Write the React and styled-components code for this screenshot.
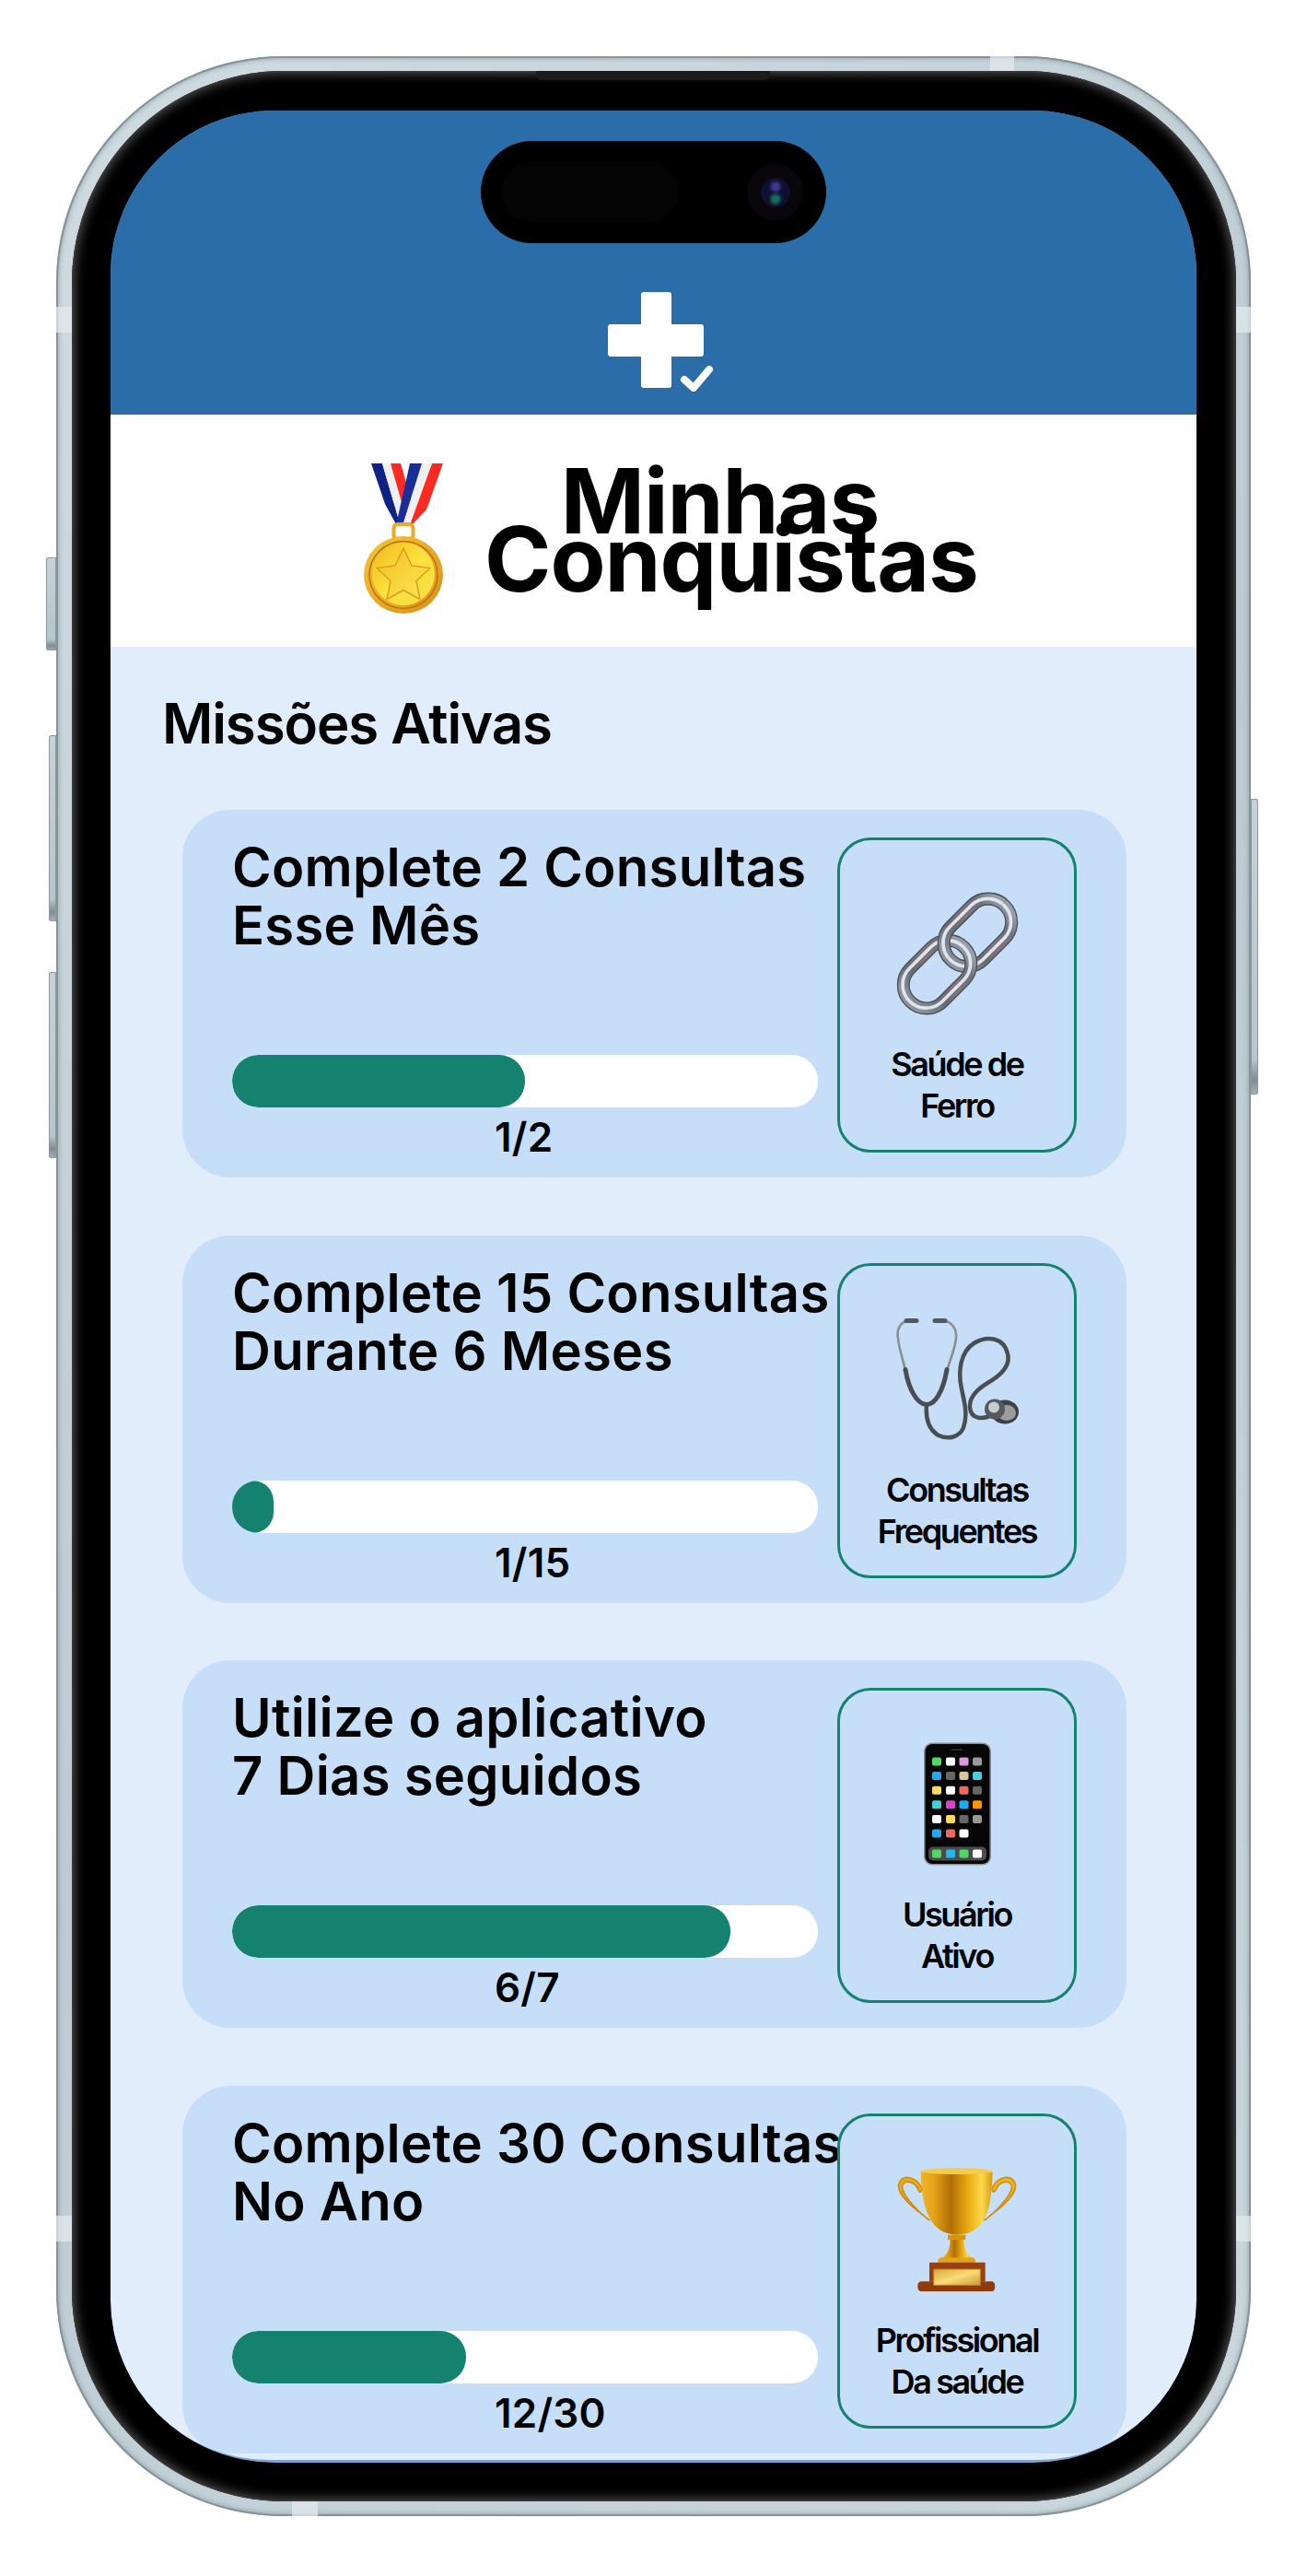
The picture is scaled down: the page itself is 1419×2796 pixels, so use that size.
import styled, { createGlobalStyle } from "styled-components"

const GlobalStyle = createGlobalStyle`
    body {
        margin: 0;
        background: #fff;
        font-family: "Inter", "Liberation Sans", sans-serif;
        color: #000;
    }
`

const Page = styled.div`
    width: 1419px;
    height: 2796px;
    padding: 61px;
    box-sizing: border-box;
    overflow: hidden;
`

const Phone = styled.div`
    position: relative;
    width: 1297px;
    height: 2670px;
    box-sizing: border-box;
    padding: 16px 16px 16px 17px;
    border-radius: 246px;
    background: linear-gradient(135deg, #cfdbe1 0%, #bccbd3 50%, #cad7dd 100%);
    box-shadow: inset 0 0 0 2px #84949a, inset 0 0 5px 3px rgba(110, 125, 132, 0.45);
`

const SideButton = styled.div`
    position: absolute;
    top: ${({ $top }) => $top}px;
    height: ${({ $height }) => $height}px;
    width: ${({ $width }) => $width}px;
    ${({ $right, $width }) => ($right ? `right: -${$width}px;` : `left: -${$width}px;`)}
    border-radius: ${({ $right }) => ($right ? "0 3px 3px 0" : "3px 0 0 3px")};
    background: linear-gradient(180deg, #c6d2d8 0%, #b7c5cc 88%, #7f8d93 95%, #a5b3ba 100%);
    box-shadow: inset 0 0 0 1px #8b9aa1;
`

const Band = styled.div`
    position: absolute;
    background: rgba(226, 233, 236, 0.75);
    ${({ $pos }) => $pos}
`

const Bezel = styled.div`
    position: relative;
    height: 100%;
    box-sizing: border-box;
    padding: 43px 43px 42px 42px;
    border-radius: 230px;
    background: #000;
    box-shadow: inset 0 0 0 1px #3c3c3c, inset 0 0 12px 3px rgba(105, 105, 105, 0.75);
`

const Speaker = styled.div`
    position: absolute;
    top: 0;
    left: 504px;
    width: 254px;
    height: 10px;
    border-radius: 0 0 6px 6px;
    background: #1b1b1b;
`

const Screen = styled.div`
    position: relative;
    height: 100%;
    display: flex;
    flex-direction: column;
    overflow: hidden;
    border-radius: 178px;
    background: #7ba6cf;
`

const Island = styled.div`
    position: absolute;
    top: 33px;
    left: 402px;
    width: 375px;
    height: 111px;
    box-sizing: border-box;
    padding: 0 25px 0 22px;
    display: flex;
    align-items: center;
    justify-content: space-between;
    border-radius: 56px;
    background: #000;
`

const Sensor = styled.div`
    width: 193px;
    height: 65px;
    border-radius: 32px;
    background: #040404;
`

const Lens = styled.div`
    width: 61px;
    height: 61px;
    display: flex;
    align-items: center;
    justify-content: center;
    border-radius: 50%;
    background: #08050b;
`

const LensGlass = styled.div`
    width: 32px;
    height: 32px;
    border-radius: 50%;
    background: radial-gradient(circle at 50% 30%, #3a3a90 0 10%, transparent 28%),
        radial-gradient(circle at 50% 72%, #186e5c 0 10%, transparent 28%), #0f0f30;
`

const Header = styled.header`
    flex: 0 0 330px;
    box-sizing: border-box;
    padding: 0 0 25px 14px;
    display: flex;
    align-items: flex-end;
    justify-content: center;
    background: #2b6da8;
`

const HeadBand = styled.div`
    flex: 0 0 252px;
    box-sizing: border-box;
    padding: 53px 0 0 275px;
    display: flex;
    align-items: flex-start;
    gap: 45px;
    background: #fff;
`

const Heading = styled.h1`
    margin: 9px 0 0;
    width: 533px;
    font-size: 98px;
    line-height: 63px;
    font-weight: 700;
    letter-spacing: -1px;
    text-align: center;
`

const HeadLine = styled.span`
    display: block;
    padding-right: ${({ $shift }) => $shift || 0}px;
`

const Body = styled.main`
    flex: 1;
    min-height: 0;
    margin-bottom: 3px;
    padding: 47px 76px 0 78px;
    overflow: hidden;
    border-radius: 0 0 172px 172px;
    background: #e1edfa;
`

const SectionTitle = styled.h2`
    margin: 0 0 58px -22px;
    font-size: 60px;
    line-height: 72px;
    font-weight: 600;
    letter-spacing: -1.1px;
`

const CardList = styled.div`
    display: flex;
    flex-direction: column;
    gap: 62.6px;
`

const Card = styled.section`
    flex: 0 0 399px;
    height: 399px;
    box-sizing: border-box;
    padding: 30px 54px 27px;
    display: flex;
    border-radius: 52px;
    background: #c7def8;
`

const Mission = styled.div`
    flex: 1;
    min-width: 0;
`

const MissionTitle = styled.h3`
    margin: 1px 0 0;
    font-size: 58px;
    line-height: 63px;
    font-weight: 600;
    letter-spacing: 0.25px;
    white-space: nowrap;
`

const Track = styled.div`
    width: 636px;
    height: 57px;
    margin-top: 109px;
    border-radius: 28px;
    background: #fff;
    overflow: hidden;
`

const Fill = styled.div`
    height: 100%;
    border-radius: 28px;
    background: #14826f;
`

const Count = styled.div`
    margin: 7px 0 0 285px;
    font-size: 44px;
    line-height: 50px;
    font-weight: 600;
    letter-spacing: 0.2px;
`

const Badge = styled.div`
    flex: 0 0 260px;
    box-sizing: border-box;
    padding-top: 56px;
    display: flex;
    flex-direction: column;
    align-items: center;
    border: 3px solid #14826f;
    border-radius: 36px;
`

const BadgeIcon = styled.svg`
    height: 134px;
    flex: none;
`

const BadgeLabel = styled.div`
    margin-top: 31px;
    font-size: 36px;
    line-height: 45px;
    font-weight: 600;
    letter-spacing: -2.4px;
    text-align: center;
    white-space: nowrap;
`

const Logo = () => (
    <svg width="114" height="108" viewBox="0 0 114 108">
        <path
            fill="#fff"
            d="M39 0h27a3 3 0 0 1 3 3v32h32a3 3 0 0 1 3 3v29a3 3 0 0 1-3 3H69v31a3 3 0 0 1-3 3H39a3 3 0 0 1-3-3V70H3a3 3 0 0 1-3-3V38a3 3 0 0 1 3-3h33V3a3 3 0 0 1 3-3z"
        />
        <path d="M83 95l10 9 17-20" fill="none" stroke="#fff" strokeWidth="8" strokeLinecap="round" strokeLinejoin="round" />
    </svg>
)

const Medal = () => (
    <svg width="86" height="163" viewBox="0 0 86 163">
        <defs>
            <linearGradient id="medalRim" x1="0" y1="0" x2="1" y2="1">
                <stop offset="0" stopColor="#f3c53a" />
                <stop offset="0.55" stopColor="#e9a823" />
                <stop offset="1" stopColor="#d98d17" />
            </linearGradient>
            <linearGradient id="medalFace" x1="0" y1="0" x2="1" y2="1">
                <stop offset="0" stopColor="#f0b91d" />
                <stop offset="0.5" stopColor="#fbe23e" />
                <stop offset="1" stopColor="#f5dc45" />
            </linearGradient>
            <linearGradient id="medalStar" x1="0" y1="0" x2="1" y2="1">
                <stop offset="0" stopColor="#f4bf24" />
                <stop offset="1" stopColor="#fbe754" />
            </linearGradient>
        </defs>
        <path d="M29 0h11l12 42-8 22-10-14z" fill="#fd2a22" />
        <path d="M8 0h12l19 65-4 1-12-22z" fill="#0d2287" />
        <path d="M20 0h9l16 56-6 9z" fill="#eff0f2" />
        <path d="M74 0h12L68 50 52 67h-7z" fill="#fd2a22" />
        <path d="M63 0h11L50 67h-8z" fill="#eff0f2" />
        <path d="M50 0h13L42 67h-7z" fill="#1b2d97" />
        <rect x="32.5" y="66" width="21" height="16" rx="4" fill="none" stroke="#e7ab28" strokeWidth="4" />
        <ellipse cx="43" cy="121" rx="43" ry="42" fill="url(#medalRim)" />
        <ellipse cx="43" cy="121" rx="37" ry="36.5" fill="none" stroke="#b7731a" strokeWidth="1.5" />
        <ellipse cx="43" cy="120" rx="34" ry="34" fill="url(#medalFace)" />
        <path
            d="M43 92l9 19 20 2.500-15 14 4 20-18-10-18 10 4-20-15-14 20-2.500z"
            fill="url(#medalStar)"
            stroke="#dc9e20"
            strokeWidth="1.5"
            strokeLinejoin="round"
        />
    </svg>
)

const ChainRing = ({ cx, cy }) => (
    <g transform={`rotate(-45 ${cx} ${cy})`} fill="none">
        <rect x={cx - 125} y={cy - 76} width="250" height="152" rx="76" stroke="#4d5056" strokeWidth="42" />
        <rect x={cx - 125} y={cy - 76} width="250" height="152" rx="76" stroke="url(#steel)" strokeWidth="34" />
        <rect x={cx - 126} y={cy - 78} width="250" height="152" rx="76" stroke="#dfe5ec" strokeWidth="11" />
    </g>
)

const ChainIcon = () => (
    <BadgeIcon viewBox="0 0 400 400" width="133">
        <defs>
            <linearGradient id="steel" x1="0" y1="0" x2="1" y2="0">
                <stop offset="0" stopColor="#8d949d" />
                <stop offset="0.3" stopColor="#686b72" />
                <stop offset="0.55" stopColor="#83747a" />
                <stop offset="0.8" stopColor="#6e737c" />
                <stop offset="1" stopColor="#98a0ab" />
            </linearGradient>
            <clipPath id="chainOver">
                <path d="M0 0H385L0 385z" />
            </clipPath>
        </defs>
        <ChainRing cx={266} cy={132} />
        <ChainRing cx={134} cy={268} />
        <g clipPath="url(#chainOver)">
            <ChainRing cx={266} cy={132} />
        </g>
    </BadgeIcon>
)

const StethoscopeIcon = () => (
    <BadgeIcon viewBox="0 0 133 133" width="133">
        <g fill="none" strokeLinecap="round" strokeLinejoin="round">
            <path d="M15 3C5 3 0 12 2 22c1 12 6 24 8 36" stroke="#8b8f92" strokeWidth="2.600" />
            <path d="M50 3c10 0 16 9 15 19-1 12-7 24-10 36" stroke="#8b8f92" strokeWidth="2.600" />
            <path d="M10 56c4 24 14 38 23 38s18-14 22-38" stroke="#4b4e51" strokeWidth="5" />
            <path
                d="M33 94c-1 12 1 26 12 33 12 6 24 2 28-8 5-14 1-28-2-42-4-18-2-40 14-50 14-8 32-6 36 12 3 12-7 22-16 28-12 7-26 16-25 30 1 13 14 15 28 6"
                stroke="#4b4e51"
                strokeWidth="4.500"
            />
            <path d="M11 3h11M42 3h11" stroke="#55585a" strokeWidth="5" />
        </g>
        <ellipse cx="118" cy="102" rx="15" ry="13" fill="#3e4144" />
        <ellipse cx="120" cy="103" rx="10" ry="8.500" fill="#9a9c9e" />
        <ellipse cx="107" cy="99" rx="11" ry="11" fill="#565a5e" />
        <circle cx="106" cy="97" r="6" fill="#c9cccd" />
    </BadgeIcon>
)

const phoneRows = [
    ["#4cd964", "#fff", "#dc9be0", "#999"],
    ["#1fa9f0", "#666", "#d9c39a", "#45d0e0"],
    ["#ffd95a", "#fff", "#ee6a60", "#666"],
    ["#45d0d5", "#d246c8", "#1fa9f0", "#ff9500"],
    ["#fff", "#ffd95a", "#666", "#999"],
    ["#1fa9f0", "#ee6a60", "#fff"],
]
const phoneCols = [9, 24, 38.500, 53]
const phoneDock = ["#4cd964", "#1fb8f0", "#4cd964", "#fff"]

const PhoneIcon = () => (
    <BadgeIcon viewBox="0 0 73 133" width="73">
        <rect x="0" y="0" width="73" height="133" rx="9" fill="#8e8e90" />
        <rect x="1.500" y="1.500" width="70" height="130" rx="8" fill="#060606" />
        <rect x="30" y="7" width="12" height="1.500" rx="0.750" fill="#333" />
        {phoneRows.map((row, r) =>
            row.map((color, c) => (
                <rect key={`${r}-${c}`} x={phoneCols[c]} y={16 + r * 15.600} width="10" height="9" rx="2" fill={color} />
            ))
        )}
        <rect x="5" y="113" width="63" height="15" rx="5" fill="#4c4c4e" />
        {phoneDock.map((color, c) => (
            <rect key={c} x={phoneCols[c]} y="116" width="10" height="9" rx="2" fill={color} />
        ))}
    </BadgeIcon>
)

const TrophyIcon = () => (
    <BadgeIcon viewBox="75 70 390 402" width="130">
        <defs>
            <linearGradient id="cup" x1="0" y1="0" x2="1" y2="0">
                <stop offset="0" stopColor="#f0b528" />
                <stop offset="0.18" stopColor="#e5a31a" />
                <stop offset="0.42" stopColor="#b06f05" />
                <stop offset="0.65" stopColor="#e8a80f" />
                <stop offset="0.85" stopColor="#fbd94a" />
                <stop offset="1" stopColor="#d89a12" />
            </linearGradient>
            <linearGradient id="plate" x1="0" y1="0" x2="1" y2="1">
                <stop offset="0" stopColor="#d8a63a" />
                <stop offset="0.5" stopColor="#f9dc78" />
                <stop offset="1" stopColor="#cf9a30" />
            </linearGradient>
        </defs>
        <path
            d="M155 135C135 96 95 92 82 118c-14 30 38 78 76 104 12 10 20 20 22 18-22-14-94-82-88-112 6-22 42-14 52 14 4 10 14 6 11-7z"
            fill="#eba91c"
            stroke="#d08c0e"
            strokeWidth="5"
        />
        <path
            d="M385 135c20-39 60-43 73-17 14 30-38 78-76 104-12 10-20 20-22 18 22-14 94-82 88-112-6-22-42-14-52 14-4 10-14 6-11-7z"
            fill="#f0b625"
            stroke="#d08c0e"
            strokeWidth="5"
        />
        <path d="M152 84c30-16 204-16 234 0-2 60-8 122-30 158-16 26-40 44-84 46-46-2-70-20-86-46-26-40-32-100-34-158z" fill="url(#cup)" />
        <ellipse cx="269" cy="81" rx="117" ry="10" fill="#f6cc4f" />
        <path d="M240 288h58v16h-58z" fill="#d6950f" />
        <path d="M248 304h44c0 30 10 48 28 62H220c18-14 28-32 28-62z" fill="url(#cup)" />
        <rect x="208" y="362" width="122" height="24" rx="12" fill="#e1a41c" />
        <path d="M180 378h182v62H180z" fill="#9a3f0e" />
        <path d="M156 440h226c8 0 12 6 12 16s-4 16-12 16H156c-10 0-14-6-14-16s4-16 14-16z" fill="#8e3a0c" />
        <rect x="194" y="400" width="152" height="52" fill="url(#plate)" stroke="#b97f1d" strokeWidth="3" />
    </BadgeIcon>
)

const missions = [
    { title: ["Complete 2 Consultas", "Esse Mês"], progress: 50, count: "1/2", label: ["Saúde de", "Ferro"], Icon: ChainIcon },
    { title: ["Complete 15 Consultas", "Durante 6 Meses"], progress: 7, count: "1/15", label: ["Consultas", "Frequentes"], Icon: StethoscopeIcon },
    { title: ["Utilize o aplicativo", "7 Dias seguidos"], progress: 85, count: "6/7", label: ["Usuário", "Ativo"], Icon: PhoneIcon },
    { title: ["Complete 30 Consultas", "No Ano"], progress: 40, count: "12/30", label: ["Profissional", "Da saúde"], Icon: TrophyIcon },
]

const App = () => {
    return (
        <Page>
            <GlobalStyle />
            <Phone>
                <SideButton $top={544} $height={101} $width={11} />
                <SideButton $top={737} $height={202} $width={8} />
                <SideButton $top={994} $height={202} $width={8} />
                <SideButton $right $top={806} $height={321} $width={8} />
                <Band $pos="left: 0; top: 272px; width: 17px; height: 28px;" />
                <Band $pos="right: 0; top: 272px; width: 16px; height: 28px;" />
                <Band $pos="left: 0; top: 2344px; width: 17px; height: 28px;" />
                <Band $pos="right: 0; top: 2344px; width: 16px; height: 28px;" />
                <Band $pos="top: 0; left: 1014px; width: 26px; height: 16px;" />
                <Band $pos="bottom: 0; left: 256px; width: 28px; height: 16px;" />
                <Bezel>
                    <Speaker />
                    <Screen>
                        <Island>
                            <Sensor />
                            <Lens>
                                <LensGlass />
                            </Lens>
                        </Island>
                        <Header>
                            <Logo />
                        </Header>
                        <HeadBand>
                            <Medal />
                            <Heading>
                                <HeadLine $shift={22}>Minhas</HeadLine>
                                <HeadLine>Conquistas</HeadLine>
                            </Heading>
                        </HeadBand>
                        <Body>
                            <SectionTitle>Missões Ativas</SectionTitle>
                            <CardList>
                                {missions.map(({ title, progress, count, label, Icon }) => (
                                    <Card key={title[0]}>
                                        <Mission>
                                            <MissionTitle>
                                                {title[0]}
                                                <br />
                                                {title[1]}
                                            </MissionTitle>
                                            <Track>
                                                <Fill style={{ width: progress + "%" }} />
                                            </Track>
                                            <Count>{count}</Count>
                                        </Mission>
                                        <Badge>
                                            <Icon />
                                            <BadgeLabel>
                                                {label[0]}
                                                <br />
                                                {label[1]}
                                            </BadgeLabel>
                                        </Badge>
                                    </Card>
                                ))}
                            </CardList>
                        </Body>
                    </Screen>
                </Bezel>
            </Phone>
        </Page>
    )
}

export default App
